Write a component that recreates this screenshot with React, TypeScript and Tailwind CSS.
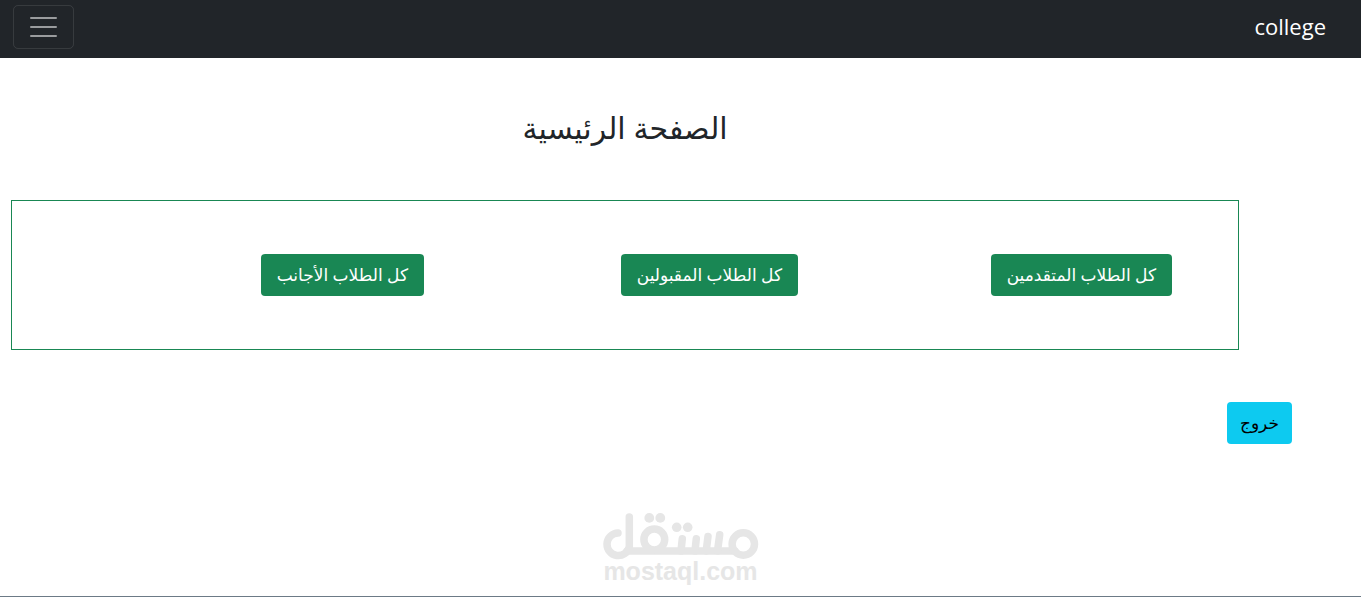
const links = [
  { id: "applicants", label: "كل الطلاب المتقدمين" },
  { id: "accepted", label: "كل الطلاب المقبولين" },
  { id: "foreign", label: "كل الطلاب الأجانب" },
];

function Navbar() {
  return (
    <header className="flex h-[58px] items-start justify-between bg-[#212529] pl-[13px] pr-[35px]">
      <a href="#home" className="pt-[11px] text-[22px] leading-[30px] text-white">
        college
      </a>
      <button
        type="button"
        aria-label="القائمة"
        className="mt-[5px] flex h-11 w-[61px] items-center justify-center rounded-[5px] border border-white/10"
      >
        <svg width="35" height="35" viewBox="0 0 35 35" fill="none">
          <path
            d="M5 8h25M5 17h25M5 26h25"
            stroke="rgba(255,255,255,0.55)"
            strokeWidth="2"
            strokeLinecap="round"
          />
        </svg>
      </button>
    </header>
  );
}

function MostaqlLogo() {
  return (
    <div dir="ltr" className="flex flex-col items-center text-[#e6e6e6]">
      <svg width="156" height="47" viewBox="0 0 156 47" fill="none" aria-label="مستقل">
        <g stroke="currentColor" strokeLinecap="round" strokeLinejoin="round" strokeWidth="7.5">
          <path d="M15 20A11.3 11.3 0 1 0 26.3 34V4" />
          <path d="M24 38H132" />
          <circle cx="51.3" cy="26.5" r="10.4" />
          <path d="M79.3 25.7L78 38M93.3 25.7L92 38M105 23.4L103.2 38M116.7 21.7L114.5 38" />
          <circle cx="140.3" cy="31" r="11.2" />
        </g>
        <g fill="currentColor">
          <circle cx="46.3" cy="4.9" r="4.9" />
          <circle cx="57.3" cy="4.9" r="4.9" />
          <circle cx="73.7" cy="14.3" r="4.8" />
          <circle cx="84.7" cy="14.3" r="4.8" />
        </g>
      </svg>
      <span className="font-['Liberation_Sans'] text-[25px] font-bold leading-[22px]">mostaql.com</span>
    </div>
  );
}

export default function App() {
  return (
    <div
      dir="rtl"
      className="flex min-h-screen flex-col border-b border-[#6c7a86] bg-white font-['Open_Sans','DejaVu_Sans',sans-serif] text-[#212529]"
    >
      <Navbar />

      <main className="flex-1">
        <section className="ml-[11px] mr-[122px] pt-[50px]">
          <h1 className="text-center text-[30px] font-medium leading-10">الصفحة الرئيسية</h1>
          <div className="mt-[52px] grid grid-cols-3 border border-[#198754] py-[53px] pl-[38px] pr-[66px]">
            {links.map((link) => (
              <div key={link.id} className="flex">
                <button
                  type="button"
                  className="h-[42px] rounded bg-[#198754] px-4 text-[17px] leading-7 text-white"
                >
                  {link.label}
                </button>
              </div>
            ))}
          </div>
        </section>

        <div className="mt-[52px] flex pr-[69px]">
          <button type="button" className="h-[42px] rounded bg-[#0dcaf0] px-[13px] text-[17px] leading-7 text-black">
            خروج
          </button>
        </div>
      </main>

      <footer className="flex justify-center pb-[14px]">
        <MostaqlLogo />
      </footer>
    </div>
  );
}
